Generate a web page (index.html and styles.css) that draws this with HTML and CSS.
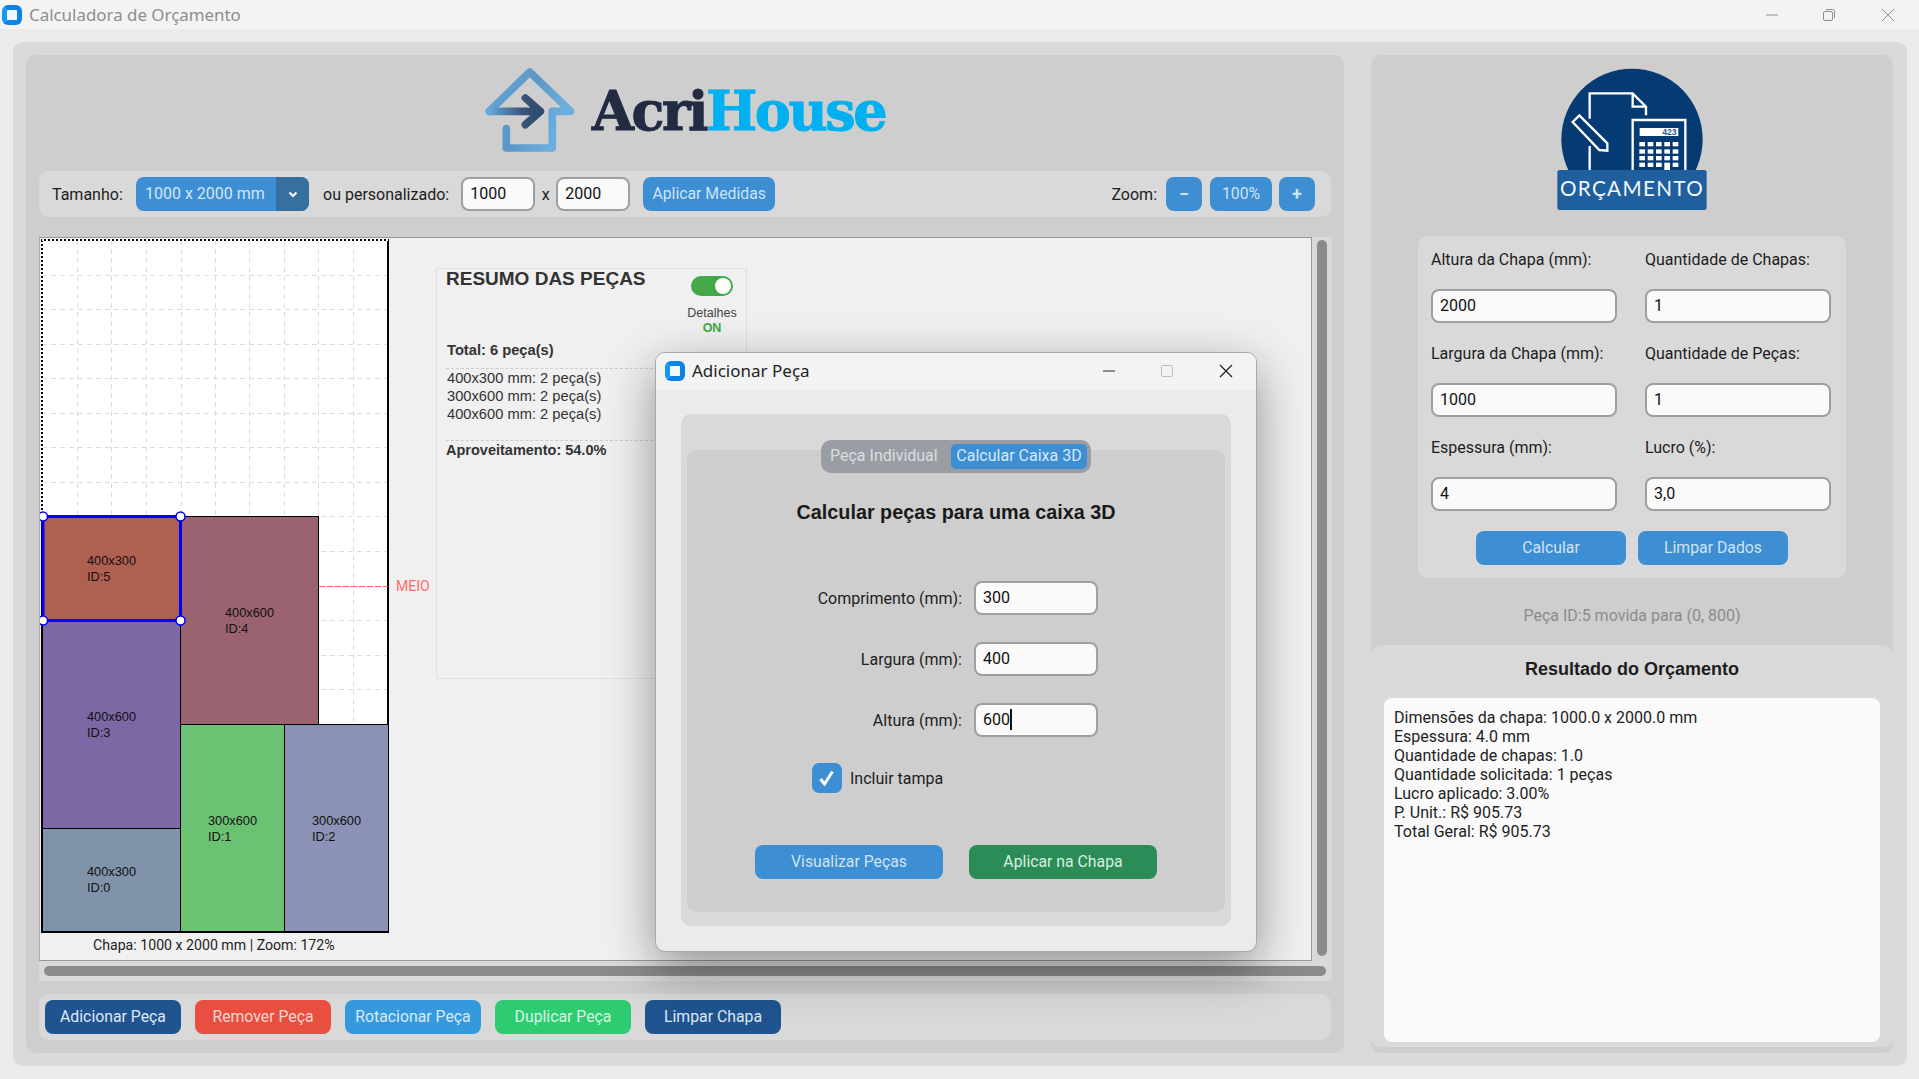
FILE: index.html
```html
<!DOCTYPE html>
<html lang="pt-BR">
<head>
    <meta charset="UTF-8">
    <title>Calculadora de Orçamento</title>
    <link rel="stylesheet" href="styles.css">
</head>
<body>
    <header class="titlebar">
        <span class="app-icon"></span>
        <span class="titlebar-text">Calculadora de Orçamento</span>
        <span class="win-ctrls">
            <svg width="14" height="14" viewBox="0 0 14 14"><path d="M1 7h12" /></svg>
            <svg width="14" height="14" viewBox="0 0 14 14"><rect x="1.5" y="3.5" width="9" height="9" rx="1.5"/><path d="M4 1.5h6.5a2 2 0 0 1 2 2V10" /></svg>
            <svg width="14" height="14" viewBox="0 0 14 14"><path d="M1 1l12 12M13 1l-12 12" /></svg>
        </span>
    </header>

    <main class="app">
        <section class="panel panel-left">
            <div class="brand">
                <svg class="brand-icon" width="90" height="84" viewBox="45 40 268 252">
                    <defs>
                        <linearGradient id="arrowGrad" x1="0" x2="1" y1="0" y2="0">
                            <stop offset="0" stop-color="#63a9dc"/>
                            <stop offset="0.65" stop-color="#3a5479"/>
                            <stop offset="1" stop-color="#2f4a70"/>
                        </linearGradient>
                        <linearGradient id="roofGrad" x1="0" x2="1" y1="0" y2="0.4">
                            <stop offset="0" stop-color="#62a8db"/>
                            <stop offset="0.55" stop-color="#5c97c6"/>
                            <stop offset="1" stop-color="#6bb0e0"/>
                        </linearGradient>
                    </defs>
                    <path class="logo-stroke" stroke="url(#roofGrad)" d="M108 222v58h138v-110h55l-123-118-121 118" />
                    <path class="logo-stroke" stroke="url(#arrowGrad)" d="M57 170h153M165 130l45 40-45 40" />
                </svg>
                <span class="brand-name">Acri<span class="brand-accent">House</span></span>
            </div>

            <div class="bar toolbar">
                <span class="size-label">Tamanho:</span>
                <span class="select"><span class="select-value">1000 x 2000 mm</span><span class="select-arrow"><svg width="10" height="7" viewBox="0 0 10 7"><path d="M1.5 1.5l3.500 3.500 3.500-3.500" /></svg></span></span>
                <span>ou personalizado:</span>
                <span class="input input-small">1000</span>
                <span class="times">x</span>
                <span class="input input-small input-next">2000</span>
                <button class="btn btn-apply">Aplicar Medidas</button>
                <span class="zoom-label">Zoom:</span>
                <button class="btn btn-zoom"><b>−</b></button>
                <button class="btn btn-pct">100%</button>
                <button class="btn btn-zoom"><b>+</b></button>
            </div>

            <div class="scroll-area">
                <div class="scroll-row">
                    <div class="canvas">
                        <div class="sheet-col">
                            <svg class="sheet" width="352" height="696" viewBox="40 238 352 696">
                                <rect class="sheet-bg" x="42" y="240" width="346" height="692"/>
                                <g class="grid">
                                    <path d="M77.5 240V932M111.5 240V932M146.5 240V932M181.5 240V932M215.5 240V932M249.5 240V932M284.5 240V932M318.5 240V932M353.5 240V932"/>
                                    <path d="M42 275.5H388M42 309.5H388M42 344.5H388M42 378.5H388M42 413.5H388M42 447.5H388M42 482.5H388M42 516.5H388M42 551.5H388M42 586.5H388M42 620.5H388M42 655.5H388M42 689.5H388"/>
                                </g>
                                <path class="sheet-edge" d="M42 932V240H388V932Z"/>
                                <path class="sheet-dash" d="M42 516V240H388"/>
                                <path class="meio-line" d="M319 586.5H388"/>
                                <rect class="piece p4" x="180.5" y="516.5" width="138" height="208"/>
                                <rect class="piece p3" x="42.5" y="620.5" width="138" height="208"/>
                                <rect class="piece p0" x="42.5" y="828.5" width="138" height="103"/>
                                <rect class="piece p1" x="180.5" y="724.5" width="104" height="207"/>
                                <rect class="piece p2" x="284.5" y="724.5" width="104" height="207"/>
                                <rect class="piece p5" x="43" y="516.5" width="137.5" height="104"/>
                                <g class="handles">
                                    <circle cx="43" cy="516.5" r="4.5"/>
                                    <circle cx="180.5" cy="516.5" r="4.5"/>
                                    <circle cx="43" cy="620.5" r="4.5"/>
                                    <circle cx="180.5" cy="620.5" r="4.5"/>
                                </g>
                                <g class="piece-label">
                                    <text x="87" y="565">400x300</text><text x="87" y="581">ID:5</text>
                                    <text x="225" y="617">400x600</text><text x="225" y="633">ID:4</text>
                                    <text x="87" y="721">400x600</text><text x="87" y="737">ID:3</text>
                                    <text x="87" y="876">400x300</text><text x="87" y="892">ID:0</text>
                                    <text x="208" y="825">300x600</text><text x="208" y="841">ID:1</text>
                                    <text x="312" y="825">300x600</text><text x="312" y="841">ID:2</text>
                                </g>
                            </svg>
                            <div class="sheet-caption">Chapa: 1000 x 2000 mm | Zoom: 172%</div>
                        </div>
                        <span class="meio-text">MEIO</span>
                        <aside class="summary">
                            <div class="summary-head">
                                <h3>RESUMO DAS PEÇAS</h3>
                                <div class="toggle-box">
                                    <span class="toggle"><span class="toggle-knob"></span></span>
                                    <span class="toggle-label">Detalhes</span>
                                    <span class="toggle-state">ON</span>
                                </div>
                            </div>
                            <div class="summary-total">Total: 6 peça(s)</div>
                            <div class="summary-list">
                                <div>400x300 mm: 2 peça(s)</div>
                                <div>300x600 mm: 2 peça(s)</div>
                                <div>400x600 mm: 2 peça(s)</div>
                            </div>
                            <div class="summary-foot">Aproveitamento: 54.0%</div>
                        </aside>
                    </div>
                    <div class="vscroll"><span class="vthumb"></span></div>
                </div>
                <div class="hscroll"><span class="hthumb"></span></div>
            </div>

            <div class="bar actions">
                <button class="btn btn-action navy">Adicionar Peça</button>
                <button class="btn btn-action red">Remover Peça</button>
                <button class="btn btn-action sky">Rotacionar Peça</button>
                <button class="btn btn-action green">Duplicar Peça</button>
                <button class="btn btn-action navy">Limpar Chapa</button>
            </div>
        </section>

        <section class="panel panel-right">
            <div class="quote-logo">
                <svg width="190" height="155" viewBox="0 0 570 465">
                    <circle class="ql-disc" cx="276" cy="238" r="212"/>
                    <g class="ql-line">
                        <path d="M149 330V258M149 176V100H278L318 140V166M278 100V140H318"/>
                        <path d="M98 186L118 166L202 250V272L178 270Z"/>
                        <path d="M278 330V180H436V330"/>
                    </g>
                    <rect class="ql-white" x="299" y="204" width="116" height="24"/>
                    <text class="ql-num" x="410" y="225">423</text>
                    <g class="ql-keys">
                        <rect x="298" y="246" width="17" height="13"/><rect x="323" y="246" width="17" height="13"/><rect x="348" y="246" width="17" height="13"/><rect x="373" y="246" width="17" height="13"/><rect x="398" y="246" width="17" height="13"/>
                        <rect x="298" y="268" width="17" height="13"/><rect x="323" y="268" width="17" height="13"/><rect x="348" y="268" width="17" height="13"/><rect x="373" y="268" width="17" height="13"/><rect x="398" y="268" width="17" height="13"/>
                        <rect x="298" y="288" width="17" height="13"/><rect x="323" y="288" width="17" height="13"/><rect x="348" y="288" width="17" height="13"/><rect x="373" y="288" width="17" height="13"/><rect x="398" y="288" width="17" height="13"/>
                        <rect x="298" y="308" width="17" height="13"/><rect x="323" y="308" width="17" height="13"/><rect x="348" y="308" width="17" height="13"/><rect x="373" y="308" width="17" height="22"/><rect x="398" y="308" width="17" height="13"/>
                    </g>
                    <rect class="ql-banner" x="52" y="330" width="448" height="120" rx="7"/>
                    <text class="ql-word" x="276" y="409">ORÇAMENTO</text>
                </svg>
            </div>

            <div class="form-card">
                <div class="form-grid">
                    <label>Altura da Chapa (mm):</label>
                    <label>Quantidade de Chapas:</label>
                    <span class="input">2000</span>
                    <span class="input">1</span>
                    <label>Largura da Chapa (mm):</label>
                    <label>Quantidade de Peças:</label>
                    <span class="input">1000</span>
                    <span class="input">1</span>
                    <label>Espessura (mm):</label>
                    <label>Lucro (%):</label>
                    <span class="input">4</span>
                    <span class="input">3,0</span>
                </div>
                <div class="form-actions">
                    <button class="btn btn-form">Calcular</button>
                    <button class="btn btn-form">Limpar Dados</button>
                </div>
            </div>

            <p class="status">Peça ID:5 movida para (0, 800)</p>

            <div class="result">
                <h2>Resultado do Orçamento</h2>
                <div class="result-box">Dimensões da chapa: 1000.0 x 2000.0 mm
Espessura: 4.0 mm
Quantidade de chapas: 1.0
Quantidade solicitada: 1 peças
Lucro aplicado: 3.00%
P. Unit.: R$ 905.73
Total Geral: R$ 905.73</div>
            </div>
        </section>
    </main>

    <div class="dialog">
        <div class="dialog-title">
            <span class="app-icon"></span>
            <span class="dialog-title-text">Adicionar Peça</span>
            <span class="dialog-ctrls">
                <svg width="14" height="14" viewBox="0 0 14 14"><path d="M1 7h12" /></svg>
                <svg class="ctrl-off" width="14" height="14" viewBox="0 0 14 14"><rect x="1.5" y="1.5" width="11" height="11" rx="1"/></svg>
                <svg width="14" height="14" viewBox="0 0 14 14"><path d="M1 1l12 12M13 1l-12 12" /></svg>
            </span>
        </div>
        <div class="dialog-body">
            <div class="tab-panel">
                <div class="tabs">
                    <span class="tab">Peça Individual</span>
                    <span class="tab tab-on">Calcular Caixa 3D</span>
                </div>
                <div class="tab-inner">
                    <h3>Calcular peças para uma caixa 3D</h3>
                    <div class="box-fields">
                        <label>Comprimento (mm):</label><span class="input">300</span>
                        <label>Largura (mm):</label><span class="input">400</span>
                        <label>Altura (mm):</label><span class="input">600<i class="caret"></i></span>
                    </div>
                    <div class="check-row">
                        <span class="check"><svg width="18" height="16" viewBox="0 0 18 16"><path d="M2.5 9l4 5 8-12.500" /></svg></span>
                        <span>Incluir tampa</span>
                    </div>
                    <div class="dialog-actions">
                        <button class="btn btn-dialog">Visualizar Peças</button>
                        <button class="btn btn-dialog dark-green">Aplicar na Chapa</button>
                    </div>
                </div>
            </div>
        </div>
    </div>
</body>
</html>
```

FILE: styles.css
```css
*{box-sizing:border-box;margin:0;padding:0;}
body{position:relative;height:1079px;overflow:hidden;background:#ebebeb;font-family:Roboto,"Liberation Sans",sans-serif;font-size:16px;color:#1d1d1d;}
svg{display:block;}
button{border:0;font-family:inherit;cursor:default;}

/* title bar */
.titlebar{height:29px;background:#f3f3f3;display:flex;align-items:center;padding-left:2px;}
.app-icon{width:20px;height:20px;border-radius:6px;border:5px solid #0a84e8;border-left-color:#1599f5;background:#f2f7fb;flex:none;}
.titlebar-text{margin-left:7px;font-family:"Noto Sans",sans-serif;font-size:16.9px;color:#8e8e8e;}
.win-ctrls{margin-left:auto;display:flex;gap:44px;padding-right:24px;}
.win-ctrls svg:nth-child(2){margin:0 1px 0 -1px;}
.win-ctrls path,.win-ctrls rect{fill:none;stroke:#8e8e8e;stroke-width:1;}

/* main layout */
.app{position:absolute;left:13px;top:42px;width:1894px;height:1024px;background:#d9d9d9;border-radius:10px;padding:13px 14px 13px 13px;display:flex;gap:27px;}
.panel{background:#cecece;border-radius:10px;height:998px;}
.panel-left{width:1318px;padding:13px;display:flex;flex-direction:column;}
.panel-right{width:522px;display:flex;flex-direction:column;align-items:center;}

.brand{height:103px;display:flex;align-items:flex-start;padding-left:446px;}
.brand-icon{margin-right:17px;}
.brand-name{font-family:"DejaVu Serif",serif;font-weight:700;font-size:54px;line-height:64px;margin-top:11px;color:#232b43;letter-spacing:-2.4px;-webkit-text-stroke:1px currentColor;}
.brand-accent{color:#00b0f0;}
.logo-stroke{fill:none;stroke-width:23;stroke-linecap:round;stroke-linejoin:round;}

.bar{background:#d9d9d9;border-radius:10px;display:flex;align-items:center;}
.toolbar{height:46px;padding:0 16px 0 13px;}
.size-label{width:84px;}
.select{display:flex;width:173px;height:34px;border-radius:8px;overflow:hidden;margin-right:14px;background:#3d8ed3;color:#d4e6f6;}
.select-value{flex:1;line-height:33px;padding-left:9px;}
.select-arrow{width:33px;background:#36709f;display:flex;align-items:center;justify-content:center;}
.select-arrow path{fill:none;stroke:#fff;stroke-width:2;}
.input{display:flex;align-items:center;height:34px;background:#fafafa;border:2px solid #9ba0a6;border-radius:8px;padding:0 0 2px 7px;color:#111;}
.input-small{width:74px;margin-left:12px;}
.input-next{margin-left:0;}
.times{width:21px;text-align:center;}
.btn{background:#3d8ed3;color:#cfe3f5;border-radius:8px;height:34px;font-size:15.8px;padding-bottom:2px;}
.btn-apply{width:132px;margin-left:13px;}
.zoom-label{margin-left:auto;margin-right:9px;}
.btn-zoom{width:36px;font-size:18px;margin-right:8px;}
.btn-zoom:last-child{margin-right:0;}
.btn-pct{width:62px;margin-right:7px;}

/* canvas with scrollbars */
.scroll-area{margin-top:20px;height:744px;width:1293px;background:#d9d9d9;display:flex;flex-direction:column;}
.scroll-row{display:flex;height:724px;}
.canvas{width:1273px;height:724px;background:#f0f0f0;border:1px solid #999;border-left-color:#aaa;display:flex;position:relative;}
.sheet-col{width:352px;}
.sheet-caption{font-size:14.15px;padding-left:53px;line-height:22px;}
.sheet-bg{fill:#fff;}
.grid path{fill:none;stroke:#dcdcdc;stroke-width:1;stroke-dasharray:5 4;}
.sheet-edge{fill:none;stroke:#000;stroke-width:2;}
.sheet-dash{fill:none;stroke:#fff;stroke-width:2;stroke-dasharray:2 2;}
.meio-line{fill:none;stroke:#ff5f5f;stroke-width:1;stroke-dasharray:6 2;}
.piece{stroke:#000;stroke-width:1;}
.p0{fill:#8193aa;}
.p1{fill:#6cc273;}
.p2{fill:#8c92b5;}
.p3{fill:#7d68a6;}
.p4{fill:#9b6370;}
.p5{fill:#b06050;stroke:#0000ff;stroke-width:3;}
.handles circle{fill:#fff;stroke:#0000ff;stroke-width:1.5;}
.piece-label text{font-family:"Liberation Sans",sans-serif;font-size:12.8px;fill:#111;}
.meio-text{position:absolute;left:356px;top:340px;color:#ff6b6b;font-size:14px;}

.summary{margin:30px 0 0 44px;width:311px;height:411px;background:#f0f0f0;border:1px solid #e0e0e0;padding:0 9px;font-family:"Liberation Sans",sans-serif;font-size:14.7px;color:#333;}
.summary-head{display:flex;height:70px;justify-content:space-between;}
.summary-head h3{font-size:19px;line-height:20px;color:#333;}
.toggle-box{display:flex;flex-direction:column;align-items:center;width:52px;margin-top:7px;margin-right:-1px;}
.toggle{width:42px;height:20px;border-radius:10px;background:#43a847;position:relative;}
.toggle-knob{position:absolute;right:2px;top:2px;width:16px;height:16px;border-radius:50%;background:#fff;}
.toggle-label{font-size:12.5px;margin-top:9px;line-height:16px;color:#444;}
.toggle-state{font-size:12.5px;font-weight:700;color:#43a847;line-height:14px;}
.summary-total{font-weight:700;line-height:20px;border-bottom:1px dashed #ccc;height:29px;margin-top:1px;padding-left:1px;}
.summary-list{line-height:18px;height:72px;border-bottom:1px dashed #ccc;padding-left:1px;}
.summary-foot{font-weight:700;font-size:14.5px;line-height:18px;}

.vscroll{width:20px;padding:3px 0 3px 5px;}
.vthumb{display:block;width:10px;height:716px;background:#8b8b8b;border-radius:5px;}
.hscroll{height:20px;padding:5px 6px 5px 5px;}
.hthumb{display:block;height:10px;background:#8b8b8b;border-radius:5px;}

.actions{height:46px;margin-top:13px;padding:0 6px;gap:14px;}
.btn-action{width:136px;}
.navy{background:#1f5490;color:#dfe8f2;}
.red{background:#e94f40;color:#f6d5d2;}
.sky{background:#3799dd;color:#d6eaf8;}
.green{background:#2ecc71;color:#d5f5e3;}

/* right column */
.quote-logo{height:181px;padding-top:5px;width:190px;margin-left:6px;}
.form-card{width:428px;height:342px;background:#d9d9d9;border-radius:10px;padding:0 13px;}
.form-grid{display:grid;grid-template-columns:186px 186px;column-gap:28px;}
.form-grid label{display:flex;align-items:center;height:34px;margin-top:6px;margin-bottom:13px;}
.form-grid .input{margin-bottom:7px;}
.form-actions{display:flex;justify-content:center;gap:12px;margin-top:13px;}
.btn-form{width:150px;}
.status{height:67px;line-height:76px;color:#8b8b8b;text-align:center;}
.result{width:522px;height:402px;background:#d9d9d9;border-radius:10px;padding:0 13px;}
.result h2{font-family:"Liberation Sans",sans-serif;font-size:18px;line-height:24px;padding-top:12px;height:53px;text-align:center;color:#1d1d1d;}
.result-box{height:344px;background:#fafafa;border-radius:8px;padding:10px;line-height:19px;white-space:pre-line;color:#222;}

/* dialog */
.dialog{position:absolute;left:655px;top:352px;width:602px;height:600px;background:#ebebeb;border:1px solid #a8a8a8;border-radius:10px;box-shadow:0 16px 50px rgba(0,0,0,.4);overflow:hidden;}
.dialog-title{height:37px;background:#f2f4f2;display:flex;align-items:center;padding:0 0 2px 9px;}
.dialog-title-text{margin-left:7px;font-family:"Noto Sans",sans-serif;font-size:17px;color:#222;}
.dialog-ctrls{margin-left:auto;display:flex;gap:44px;padding-right:23px;}
.dialog-ctrls svg:nth-child(2){margin-right:1px;}
.dialog-ctrls path{fill:none;stroke:#222;stroke-width:1.2;}
.ctrl-off rect{fill:none;stroke:#bbb;stroke-width:1;}
.dialog-body{padding:24px 25px;}
.tab-panel{height:512px;background:#d9d9d9;border-radius:10px;padding:26px 6px 14px;position:relative;}
.tabs{position:absolute;left:140px;top:26px;width:270px;height:33px;background:#9a9ea4;border-radius:10px;display:flex;align-items:center;padding:0 4px 2px 9px;justify-content:space-between;color:#d9dde0;z-index:1;}
.tab-on{width:136px;height:25px;line-height:24px;background:#3d8ed3;color:#d7e8f6;border-radius:5px;text-align:center;margin-top:2px;}
.tab-inner{margin-top:10px;height:462px;background:#cecece;border-radius:10px;}
.tab-inner h3{font-family:"Liberation Sans",sans-serif;font-size:19.8px;text-align:center;padding-top:50px;line-height:24px;height:131px;color:#1a1a1a;}
.box-fields{display:grid;grid-template-columns:144px 124px;column-gap:12px;row-gap:27px;padding-left:131px;}
.box-fields label{justify-self:end;white-space:nowrap;align-self:center;}
.caret{display:inline-block;width:2px;height:21px;background:#111;}
.check-row{display:flex;align-items:center;gap:8px;margin-top:26px;margin-left:125px;}
.check{width:30px;height:30px;border-radius:7px;background:#3d8ed3;display:flex;align-items:center;justify-content:center;}
.check path{fill:none;stroke:#fff;stroke-width:3;}
.dialog-actions{display:flex;gap:26px;margin-top:52px;margin-left:68px;}
.btn-dialog{width:188px;}
.dark-green{background:#2b8c57;color:#d5efdf;}

/* quote logo */
.ql-disc{fill:#053a73;}
.ql-line path{fill:none;stroke:#fff;stroke-width:7;}
.ql-white{fill:#fff;}
.ql-num{font-family:"Liberation Sans",sans-serif;font-weight:700;font-size:26px;fill:#2a5a95;text-anchor:end;}
.ql-keys rect{fill:#fff;}
.ql-banner{fill:#1f5f9e;}
.ql-word{font-family:Lato,sans-serif;font-size:62px;letter-spacing:4px;fill:#f2f6fa;text-anchor:middle;}
```
